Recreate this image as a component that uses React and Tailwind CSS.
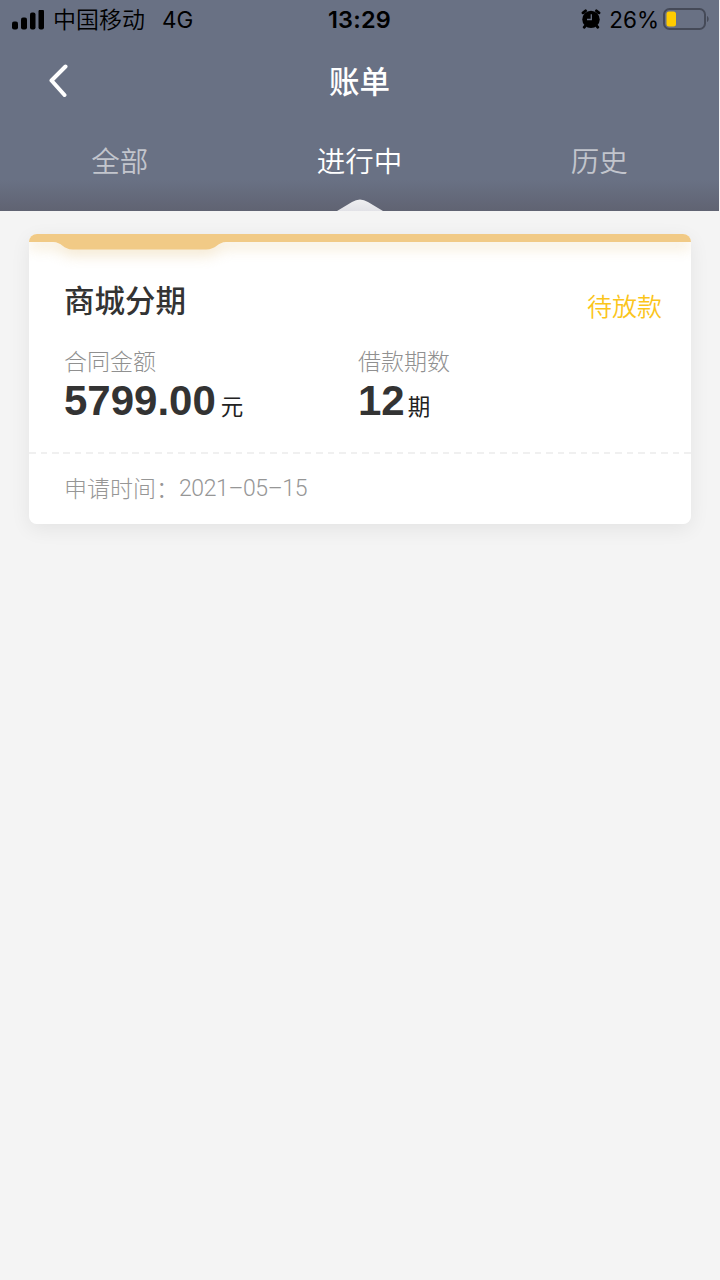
import { useState } from "react";

const TABS = ["全部", "进行中", "历史"];

const bills = [
  {
    id: 1,
    name: "商城分期",
    status: "待放款",
    amount: "5799.00",
    periods: 12,
    applyDate: "2021–05–15",
  },
];

function StatusBar() {
  return (
    <div className="grid h-10 grid-cols-3 items-center pr-[10px] pl-3 font-['Inter','Noto_Sans_CJK_SC',sans-serif] text-[23px] leading-[38px] text-black">
      <div className="flex items-center whitespace-nowrap">
        <svg width="32" height="21" viewBox="0 0 32 21" fill="currentColor">
          <rect x="0" y="11.5" width="6" height="8" rx="2" />
          <rect x="9" y="7.5" width="6" height="12" rx="2" />
          <rect x="18" y="2.5" width="5.5" height="17" rx="2" />
          <rect x="26.5" y="-0.5" width="5.5" height="20" rx="2" />
        </svg>
        <span className="ml-[9px] font-[350]">中国移动</span>
        <span className="ml-[17px] text-[22.5px]">4G</span>
      </div>
      <div className="pr-0.5 text-center text-[23.5px] font-semibold tracking-[0.2px]">13:29</div>
      <div className="flex items-center justify-end">
        <svg width="20" height="20" viewBox="0 0 20 20" className="mr-2 mb-[3px]">
          <g stroke="#000" strokeWidth="2.8" strokeLinecap="round" fill="none">
            <path d="M2 3.8 4.6 1.8M18 3.8 15.4 1.8M4.3 17 3.2 18.2M15.7 17l1.1 1.2" />
          </g>
          <circle cx="10" cy="10.4" r="8.7" />
          <path d="M10.3 5.2v5.3H6" stroke="#697184" strokeWidth="1.3" fill="none" />
        </svg>
        <span className="text-[22.5px]">26%</span>
        <svg width="46" height="22" viewBox="0 0 46 22" className="mb-[3px] ml-1">
          <rect x="1" y="1" width="41" height="20" rx="5.5" fill="none" stroke="#454a58" strokeWidth="2" />
          <rect x="3.5" y="3.5" width="9.5" height="15" rx="2.5" fill="#ffcc00" />
          <path d="M44 8c2.2.8 2.2 5.2 0 6Z" fill="#454a58" />
        </svg>
      </div>
    </div>
  );
}

function BillCard({ bill }) {
  return (
    <div className="relative h-[290px] overflow-hidden rounded-lg bg-white">
      {/* Borde superior dorado con pestaña */}
      <svg
        className="absolute top-0 left-0 [filter:drop-shadow(0_6px_7px_rgba(230,205,150,0.45))]"
        width="662"
        height="16"
        viewBox="0 0 662 16"
      >
        <path
          d="M0 0H662V8H197C189 8 187 15.5 177 15.5H44C34 15.5 33 8 24 8H0Z"
          fill="#f1ca86"
        />
      </svg>

      <div className="flex h-[111px] justify-between pt-[44px] pr-[29px] pl-[35px]">
        <h2 className="text-[30.5px] leading-[46px] font-medium text-[#333]">{bill.name}</h2>
        <span className="pt-[6px] text-[25px] leading-[46px] font-[350] text-[#fbc51b]">{bill.status}</span>
      </div>

      <div className="flex h-[107px] pl-[35px]">
        <div className="w-[294px]">
          <p className="text-[23px] leading-[34px] font-light text-[#909090]">合同金额</p>
          <p className="flex items-baseline leading-[44px]">
            <span className="text-[42px] font-bold text-[#333]">{bill.amount}</span>
            <span className="ml-[5px] text-[22.5px] text-[#222]">元</span>
          </p>
        </div>
        <div>
          <p className="text-[23px] leading-[34px] font-light text-[#909090]">借款期数</p>
          <p className="flex items-baseline leading-[44px]">
            <span className="text-[42px] font-bold text-[#333]">{bill.periods}</span>
            <span className="ml-[3px] text-[22.5px] text-[#222]">期</span>
          </p>
        </div>
      </div>

      <div className="h-[2px] bg-[repeating-linear-gradient(90deg,#f0f0f0_0_6.5px,transparent_6.5px_11.5px)]" />

      <p className="flex pt-[15px] pl-[35px] text-[23px] leading-[40px] font-light text-[#969696]">
        <span className="w-[115px]">申请时间：</span>
        <span className="font-['Roboto','Liberation_Sans',sans-serif] tracking-[-0.4px]">{bill.applyDate}</span>
      </p>
    </div>
  );
}

export default function App() {
  const [active, setActive] = useState(1);

  return (
    <div className="min-h-screen w-[720px] bg-[#f4f4f4] font-['Liberation_Sans','Noto_Sans_CJK_SC',sans-serif]">
      <header className="h-[211px] w-[719px] bg-[linear-gradient(#697184_0,#697184_180px,#606372_211px)] text-white">
        <StatusBar />

        <div className="grid h-[80px] grid-cols-3 items-center">
          <button className="pl-[48px]">
            <svg width="21" height="34" viewBox="0 0 21 34" fill="none" stroke="white" strokeWidth="4" strokeLinecap="round" strokeLinejoin="round">
              <path d="M17.5 3.5 3.5 17.5 16.5 32" />
            </svg>
          </button>
          <h1 className="pt-[6px] text-center text-[30.5px] font-medium">账单</h1>
        </div>

        <nav className="grid h-[91px] grid-cols-3">
          {TABS.map((tab, index) => (
            <button
              key={tab}
              onClick={() => setActive(index)}
              className={`relative pb-[7px] text-[28.5px] font-[350] ${
                index === active ? "text-white" : "text-white/60"
              }`}
            >
              {tab}
              {index === active && (
                <svg className="absolute bottom-0 left-[96px]" width="48" height="12" viewBox="0 0 48 12">
                  <defs>
                    <linearGradient id="notch" x1="0" y1="0" x2="0" y2="1">
                      <stop offset="0" stopColor="#efeff1" />
                      <stop offset="1" stopColor="#e2e2e7" />
                    </linearGradient>
                  </defs>
                  <path d="M1 12 16 3Q24-2 32 3L47 12Z" fill="url(#notch)" />
                </svg>
              )}
            </button>
          ))}
        </nav>
      </header>

      <main className="px-[29px] pt-[23px]">
        {bills.map((bill) => (
          <div key={bill.id} className="rounded-lg shadow-[0_5px_20px_rgba(0,0,0,0.07)]">
            <BillCard bill={bill} />
          </div>
        ))}
      </main>
    </div>
  );
}
